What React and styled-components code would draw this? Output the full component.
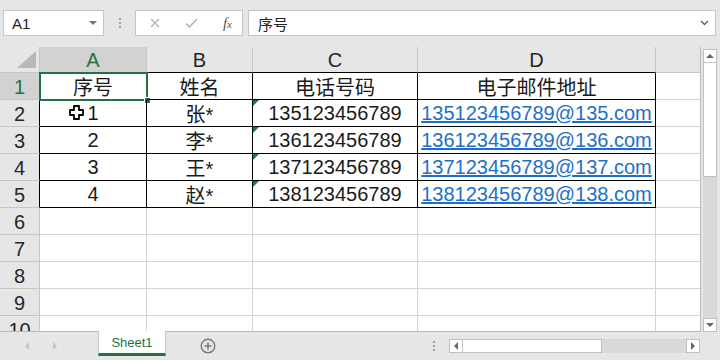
import React from "react";
import styled, { createGlobalStyle } from "styled-components";

const GREEN = "#217346";

const rows = [
  ["序号", "姓名", "电话号码", "电子邮件地址"],
  ["1", "张*", "135123456789", "135123456789@135.com"],
  ["2", "李*", "136123456789", "136123456789@136.com"],
  ["3", "王*", "137123456789", "137123456789@137.com"],
  ["4", "赵*", "138123456789", "138123456789@138.com"],
];
const cols = ["A", "B", "C", "D", "E"];

const App = () => {
  const body = [];
  for (let r = 0; r < 10; r++) {
    const data = rows[r];
    body.push(
      <RowHead key={"h" + r} $edge={r < 5} $active={r === 0}>
        {r + 1}
      </RowHead>
    );
    cols.forEach((c, ci) => {
      const inRange = data && ci < 4;
      const value = inRange ? data[ci] : "";
      body.push(
        <Cell key={c + r} $data={inRange}>
          {r === 0 && ci === 0 && (
            <Selection>
              <FillHandle />
            </Selection>
          )}
          {r === 1 && ci === 0 && <MoveCursor />}
          {r > 0 && inRange && ci === 2 && <TextFlag />}
          {ci === 3 && r > 0 && inRange ? <Link>{value}</Link> : value}
        </Cell>
      );
    });
  }

  return (
    <>
      <GlobalStyle />
      <Window>
        <FormulaBar>
          <NameBox>
            A1
            <DropArrow />
          </NameBox>
          <Grip $v />
          <ActionBox>
            <svg width="10" height="10" viewBox="0 0 10 10">
              <path d="M1 1L9 9M9 1L1 9" stroke="#b4b4b4" strokeWidth="1.4" fill="none" />
            </svg>
            <svg width="13" height="10" viewBox="0 0 13 10">
              <path d="M1 5.5L4.5 9L12 1" stroke="#b4b4b4" strokeWidth="1.5" fill="none" />
            </svg>
            <Fx>
              f<sub>x</sub>
            </Fx>
          </ActionBox>
          <FormulaInput>
            序号
            <svg width="9" height="6" viewBox="0 0 9 6">
              <path d="M1 1L4.5 4.5L8 1" stroke="#666" strokeWidth="1.5" fill="none" />
            </svg>
          </FormulaInput>
        </FormulaBar>

        <Main>
          <Sheet>
            <Corner>
              <CornerMark />
            </Corner>
            {cols.map((c, i) => (
              <ColHead key={c} $edge={i < 4} $active={i === 0}>
                {c}
              </ColHead>
            ))}
            {body}
          </Sheet>
          <VScroll>
            <ScrollBtn>
              <Arrow $dir="up" />
            </ScrollBtn>
            <VThumb />
            <Track />
            <ScrollBtn>
              <Arrow $dir="down" />
            </ScrollBtn>
          </VScroll>
        </Main>

        <TabBar>
          <TabNav>
            <Arrow $dir="left" $light />
            <Arrow $dir="right" $light />
          </TabNav>
          <SheetTab>Sheet1</SheetTab>
          <AddSheet>
            <svg width="16" height="16" viewBox="0 0 16 16">
              <circle cx="8" cy="8" r="6.8" stroke="#7a7a7a" strokeWidth="1.4" fill="none" />
              <path d="M8 4.5V11.5M4.5 8H11.5" stroke="#7a7a7a" strokeWidth="1.6" />
            </svg>
          </AddSheet>
          <Spacer />
          <Grip />
          <HScroll>
            <ScrollBtn>
              <Arrow $dir="left" />
            </ScrollBtn>
            <HThumb />
            <Track />
            <ScrollBtn>
              <Arrow $dir="right" />
            </ScrollBtn>
          </HScroll>
        </TabBar>
      </Window>
    </>
  );
};

const MoveCursor = () => (
  <CursorIcon width="15" height="15" viewBox="0 0 15 15">
    <path
      d="M5 1H10V5H14V10H10V14H5V10H1V5H5Z"
      fill="#fff"
      stroke="#000"
      strokeWidth="1.8"
      strokeLinejoin="round"
    />
  </CursorIcon>
);

//Styled components
const GlobalStyle = createGlobalStyle`
  html, body {
    margin: 0;
    padding: 0;
    background: #e6e6e6;
  }
  body {
    font-family: "Liberation Sans", "Noto Sans CJK SC", sans-serif;
  }
`;

const Window = styled.div`
  width: 720px;
  height: 360px;
  display: flex;
  flex-direction: column;
  background: #e6e6e6;
  overflow: hidden;
`;

const FormulaBar = styled.div`
  height: 47px;
  box-sizing: border-box;
  padding: 10px 4px 11px 3px;
  display: flex;
  align-items: stretch;
`;

const Field = styled.div`
  background: #fff;
  border: 1px solid #c6c6c6;
  box-sizing: border-box;
  display: flex;
  align-items: center;
  font-size: 15px;
  color: #222;
`;

const NameBox = styled(Field)`
  width: 101px;
  padding: 0 6px 0 8px;
  justify-content: space-between;
`;

const DropArrow = styled.span`
  width: 0;
  height: 0;
  border-left: 4px solid transparent;
  border-right: 4px solid transparent;
  border-top: 4px solid #777;
`;

const Grip = styled.div`
  width: 2px;
  height: 12px;
  margin: ${(p) => (p.$v ? "0 14px 0 15px" : "0 14px 0 0")};
  align-self: center;
  background: radial-gradient(circle, #a0a0a0 1px, transparent 1.2px) 0 0 / 2px 4px repeat-y;
`;

const ActionBox = styled(Field)`
  width: 108px;
  padding: 0 10px 0 14px;
  justify-content: space-between;
`;

const Fx = styled.span`
  font-family: "Liberation Serif", serif;
  font-style: italic;
  font-size: 15px;
  color: #555;
  sub {
    font-size: 11px;
    vertical-align: 0;
  }
`;

const FormulaInput = styled(Field)`
  flex: 1;
  margin-left: 5px;
  padding: 0 6px 0 9px;
  justify-content: space-between;
`;

const Main = styled.div`
  display: flex;
  height: 285px;
`;

const Sheet = styled.div`
  width: 701px;
  height: 285px;
  box-sizing: border-box;
  border-right: 1px solid #b9b9b9;
  border-bottom: 1px solid #b9b9b9;
  background: #fff;
  display: grid;
  grid-template-columns: 40px 107px 106px 165px 238px 106px;
  grid-template-rows: 26px;
  grid-auto-rows: 27px;
  overflow: hidden;
  font-size: 20px;
  color: #1a1a1a;
`;

const Corner = styled.div`
  background: #e6e6e6;
  border-right: 1px solid #c6c6c6;
  border-bottom: 1px solid #c6c6c6;
  display: flex;
  justify-content: flex-end;
  align-items: flex-end;
  padding: 0 3px 4px 0;
`;

const CornerMark = styled.span`
  width: 0;
  height: 0;
  border-left: 19px solid transparent;
  border-bottom: 17px solid #b8b8b8;
`;

const ColHead = styled.div`
  background: ${(p) => (p.$active ? "#d2d2d2" : "#e6e6e6")};
  color: ${(p) => (p.$active ? GREEN : "#262626")};
  border-right: 1px solid #c6c6c6;
  border-bottom: 1px solid ${(p) => (p.$edge ? "#000" : "#c6c6c6")};
  display: flex;
  align-items: center;
  justify-content: center;
  padding-top: 2px;
`;

const RowHead = styled.div`
  background: ${(p) => (p.$active ? "#d2d2d2" : "#e6e6e6")};
  color: ${(p) => (p.$active ? GREEN : "#262626")};
  border-right: 1px solid ${(p) => (p.$edge ? "#000" : "#c6c6c6")};
  border-bottom: 1px solid #c6c6c6;
  display: flex;
  align-items: center;
  justify-content: center;
  padding-top: 2px;
`;

const Cell = styled.div`
  position: relative;
  border-right: 1px solid ${(p) => (p.$data ? "#000" : "#d4d4d4")};
  border-bottom: 1px solid ${(p) => (p.$data ? "#000" : "#d4d4d4")};
  display: flex;
  align-items: center;
  justify-content: center;
  white-space: nowrap;
  padding-top: 1px;
`;

const Link = styled.span`
  color: #1c70cc;
  text-decoration: underline;
  text-underline-offset: 1px;
`;

const Selection = styled.div`
  position: absolute;
  top: -1px;
  left: -1px;
  right: -2px;
  bottom: -2px;
  border: 2px solid ${GREEN};
  pointer-events: none;
`;

const FillHandle = styled.span`
  position: absolute;
  right: -5px;
  bottom: -5px;
  width: 5px;
  height: 5px;
  background: ${GREEN};
  border: 1px solid #fff;
`;

const TextFlag = styled.span`
  position: absolute;
  top: 0;
  left: 0;
  width: 0;
  height: 0;
  border-top: 6px solid #1e7a3c;
  border-right: 6px solid transparent;
`;

const CursorIcon = styled.svg`
  position: absolute;
  left: 29px;
  top: 5px;
`;

const VScroll = styled.div`
  width: 19px;
  box-sizing: border-box;
  padding: 2px 3px 0 2px;
  display: flex;
  flex-direction: column;
`;

const ScrollBtn = styled.div`
  flex: 0 0 14px;
  height: 14px;
  box-sizing: border-box;
  background: #fff;
  border: 1px solid #c0c0c0;
  display: flex;
  align-items: center;
  justify-content: center;
`;

const VThumb = styled.div`
  height: 113px;
  background: #fff;
  border: 1px solid #c0c0c0;
  border-top: none;
`;

const HThumb = styled.div`
  width: 138px;
  background: #fff;
  border: 1px solid #c0c0c0;
  border-left: none;
`;

const Track = styled.div`
  flex: 1;
  background: #d9d9d9;
`;

const arrowBorders = {
  up: "border-left: 4px solid transparent; border-right: 4px solid transparent; border-bottom: 4px solid C;",
  down: "border-left: 4px solid transparent; border-right: 4px solid transparent; border-top: 4px solid C;",
  left: "border-top: 4px solid transparent; border-bottom: 4px solid transparent; border-right: 4px solid C;",
  right: "border-top: 4px solid transparent; border-bottom: 4px solid transparent; border-left: 4px solid C;",
};

const Arrow = styled.span`
  width: 0;
  height: 0;
  ${(p) => arrowBorders[p.$dir].replace("C", p.$light ? "#c4c4c4" : "#666")}
`;

const TabBar = styled.div`
  flex: 1;
  display: flex;
  align-items: center;
`;

const TabNav = styled.div`
  width: 98px;
  display: flex;
  gap: 24px;
  padding-left: 25px;
  box-sizing: border-box;
`;

const SheetTab = styled.div`
  align-self: flex-start;
  width: 68px;
  height: 25px;
  box-sizing: border-box;
  margin-top: -1px;
  background: #fff;
  border: 1px solid #c6c6c6;
  border-top: none;
  border-bottom: 3px solid ${GREEN};
  display: flex;
  align-items: center;
  justify-content: center;
  font-size: 13px;
  color: ${GREEN};
`;

const AddSheet = styled.div`
  margin-left: 34px;
  display: flex;
`;

const Spacer = styled.div`
  flex: 1;
`;

const HScroll = styled.div`
  width: 251px;
  height: 14px;
  margin-right: 20px;
  display: flex;
`;

export default App;
